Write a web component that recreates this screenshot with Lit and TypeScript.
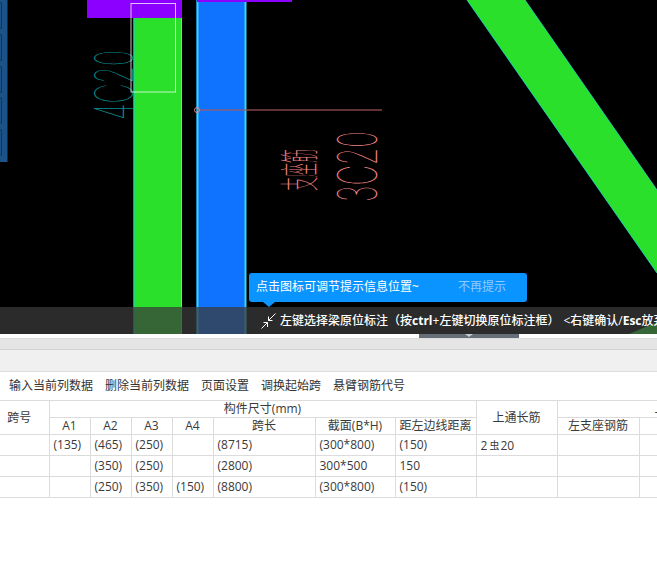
import { LitElement, html, css, svg } from 'lit'
import { customElement } from 'lit/decorators.js'

const TOOLS = ['输入当前列数据', '删除当前列数据', '页面设置', '调换起始跨', '悬臂钢筋代号']

const ROWS = [
  ['', '(135)', '(465)', '(250)', '', '(8715)', '(300*800)', '(150)', 'rebar', '', ''],
  ['', '', '(350)', '(250)', '', '(2800)', '300*500', '150', '', '', ''],
  ['', '', '(250)', '(350)', '(150)', '(8800)', '(300*800)', '(150)', '', '', ''],
]

const COL_WIDTHS = [49, 41, 41, 41, 41, 102, 80, 81, 81, 82, 96, 65]

@customElement('cad-view')
export class CadView extends LitElement {
  static styles = css`
    :host {
      display: block;
      position: absolute;
      inset: 0;
    }
    svg {
      display: block;
    }
    .teal-text {
      font-family: Inter, sans-serif;
      font-weight: 100;
      font-size: 53px;
      fill: #078a8a;
    }
    .red-text {
      font-family: Inter, sans-serif;
      font-weight: 100;
      font-size: 55px;
      fill: #f08080;
    }
    .red-cjk {
      font-family: 'Noto Sans CJK SC', sans-serif;
      font-weight: 100;
      font-size: 40px;
      fill: #f08080;
    }
  `

  render() {
    const railRows = [3, 35, 67, 98, 130]
    return html`<svg width="657" height="334" viewBox="0 0 657 334">
      <rect width="657" height="334" fill="#000"></rect>

      <rect x="0" y="0" width="7.5" height="162" fill="#1c5288"></rect>
      ${railRows.map(
        (y) => svg`<rect x="-3" y=${y} width="4.5" height="25" fill="none" stroke="#12365a"></rect>`
      )}

      <rect x="87" y="0" width="95" height="18" fill="#8b00ff"></rect>
      <rect x="133.5" y="18" width="48.5" height="316" fill="#2be02b"></rect>
      <line x1="134" y1="18" x2="134" y2="334" stroke="#1fd0c0"></line>
      <line x1="181.5" y1="18" x2="181.5" y2="334" stroke="#3df0c0"></line>

      <rect x="196.5" y="0" width="49.5" height="334" fill="#0f73ff"></rect>
      <rect x="196.5" y="0" width="2" height="334" fill="#38d8f0"></rect>
      <rect x="244.5" y="0" width="2" height="334" fill="#38d8f0"></rect>
      <rect x="197" y="0" width="95" height="2" fill="#8b00ff"></rect>

      <polygon points="467,0 525,0 657,190 657,273" fill="#2be02b"></polygon>
      <line x1="467" y1="0" x2="657" y2="273" stroke="#20e0d0" stroke-width="0.8"></line>
      <line x1="525" y1="0" x2="657" y2="190" stroke="#20e0d0" stroke-width="0.8"></line>
      <polygon points="629,334 657,322 657,334" fill="#2be02b"></polygon>

      <line x1="197" y1="110" x2="382" y2="110" stroke="#ad5a5a" stroke-width="1.5" opacity="0.75"></line>
      <circle cx="197" cy="110" r="2.5" fill="none" stroke="#e08080"></circle>

      <text
        class="teal-text"
        transform="translate(132.5 120) rotate(-90)"
        textLength="70"
        lengthAdjust="spacingAndGlyphs"
      >4C20</text>
      <text
        class="red-text"
        transform="translate(376.5 202) rotate(-90)"
        textLength="71"
        lengthAdjust="spacingAndGlyphs"
      >3C20</text>
      <text
        class="red-cjk"
        transform="translate(314 191) rotate(-90)"
        textLength="42"
        lengthAdjust="spacingAndGlyphs"
      >支座筋</text>

      <rect x="131" y="3.5" width="44.5" height="88.5" fill="none" stroke="#fff" stroke-opacity="0.75"></rect>
    </svg>`
  }
}

@customElement('app-root')
export class AppRoot extends LitElement {
  static styles = css`
    :host {
      display: block;
      width: 657px;
      height: 588px;
      overflow: hidden;
      background: #fff;
      color: #3a3a3a;
      font-family: 'Open Sans', 'Noto Sans CJK SC', sans-serif;
      font-size: 12px;
      line-height: 16px;
    }
    .canvas {
      position: relative;
      height: 334px;
      overflow: hidden;
    }
    .status {
      position: absolute;
      left: 0;
      right: 0;
      bottom: 0;
      height: 27px;
      display: flex;
      align-items: center;
      gap: 3px;
      padding-left: 261px;
      box-sizing: border-box;
      background: rgba(58, 58, 58, 0.74);
      color: #fff;
      font-weight: 500;
      white-space: nowrap;
    }
    .status b {
      font-weight: 700;
    }
    .status svg {
      flex: none;
    }
    .hint {
      margin-left: 4px;
    }
    .tip {
      position: absolute;
      left: 249px;
      top: 273px;
      width: 278px;
      height: 29px;
      box-sizing: border-box;
      padding: 0 7px 2px;
      display: flex;
      align-items: center;
      border-radius: 3px;
      background: #0a94ff;
      color: #fff;
      white-space: nowrap;
    }
    .tip::after {
      content: '';
      position: absolute;
      left: 14px;
      top: 29px;
      border: 6px solid transparent;
      border-top: 5px solid #0a94ff;
      border-bottom: 0;
    }
    .dismiss {
      margin-left: 39px;
      color: #8fcbff;
    }
    .handle-row {
      height: 4px;
      padding-left: 419px;
    }
    .handle {
      width: 100px;
      height: 4px;
      display: flex;
      justify-content: center;
      background: #666e78;
    }
    .handle i {
      border: 4px solid transparent;
      border-top: 3px solid #c8ccd0;
      border-bottom: 0;
    }
    .tabs {
      height: 10px;
      background: #e5e5e5;
      border-top: 1px solid #dcdcdc;
      border-bottom: 1px solid #d2d2d2;
    }
    .sub-tabs {
      height: 21px;
      background: #f0f0f0;
      border-bottom: 1px solid #dedede;
    }
    .toolbar {
      height: 28px;
      display: flex;
      align-items: center;
      gap: 12px;
      padding-left: 9px;
      color: #333;
    }
    table {
      table-layout: fixed;
      width: 800px;
      border-collapse: collapse;
    }
    th,
    td {
      border: 1px solid #dcdcdc;
      padding: 0 4px;
      font-weight: 400;
      white-space: nowrap;
      overflow: hidden;
    }
    th {
      padding: 0;
      text-align: center;
    }
    td:first-child {
      border-left: 0;
    }
    th.span-no {
      border-left: 0;
      padding-right: 10px;
    }
    .head-a {
      height: 17px;
    }
    .head-b {
      height: 17px;
    }
    tbody tr {
      height: 21px;
    }
    .rebar {
      font-size: 10px;
      margin: 0 1px 0 2px;
      vertical-align: 1px;
    }
  `

  renderCell(value: string) {
    if (value === 'rebar') {
      return html`<td>2<span class="rebar">虫</span>20</td>`
    }
    return html`<td>${value}</td>`
  }

  render() {
    return html`
      <div class="canvas">
        <cad-view></cad-view>
        <div class="status">
          <svg width="16" height="16" viewBox="0 0 16 16" fill="none" stroke="#fff">
            <path d="M14.5 .5L7.5 7.5M7.5 3.5V7.5H11.5"></path>
            <path d="M.5 15.5L6.5 9.5M2.5 9.5H6.5V14"></path>
          </svg>
          <span>左键选择梁原位标注（按<b>ctrl</b>+左键切换原位标注框）<span class="hint">&lt;右键确认/<b>Esc</b>放弃&gt;</span></span>
        </div>
        <div class="tip">
          <span>点击图标可调节提示信息位置~</span>
          <span class="dismiss">不再提示</span>
        </div>
      </div>
      <div class="handle-row"><div class="handle"><i></i></div></div>
      <div class="tabs"></div>
      <div class="sub-tabs"></div>
      <div class="toolbar">${TOOLS.map((t) => html`<span>${t}</span>`)}</div>
      <table>
        <colgroup>
          ${COL_WIDTHS.map((w) => html`<col style="width: ${w}px" />`)}
        </colgroup>
        <thead>
          <tr class="head-a">
            <th class="span-no" rowspan="2">跨号</th>
            <th colspan="7">构件尺寸(mm)</th>
            <th rowspan="2">上通长筋</th>
            <th colspan="3">上部钢筋</th>
          </tr>
          <tr class="head-b">
            <th>A1</th>
            <th>A2</th>
            <th>A3</th>
            <th>A4</th>
            <th>跨长</th>
            <th>截面(B*H)</th>
            <th>距左边线距离</th>
            <th>左支座钢筋</th>
            <th>跨中钢筋</th>
            <th>右支座钢筋</th>
          </tr>
        </thead>
        <tbody>
          ${ROWS.map(
            (row) => html`<tr>
              ${row.map((v) => this.renderCell(v))}
              <td></td>
            </tr>`
          )}
        </tbody>
      </table>
    `
  }
}
